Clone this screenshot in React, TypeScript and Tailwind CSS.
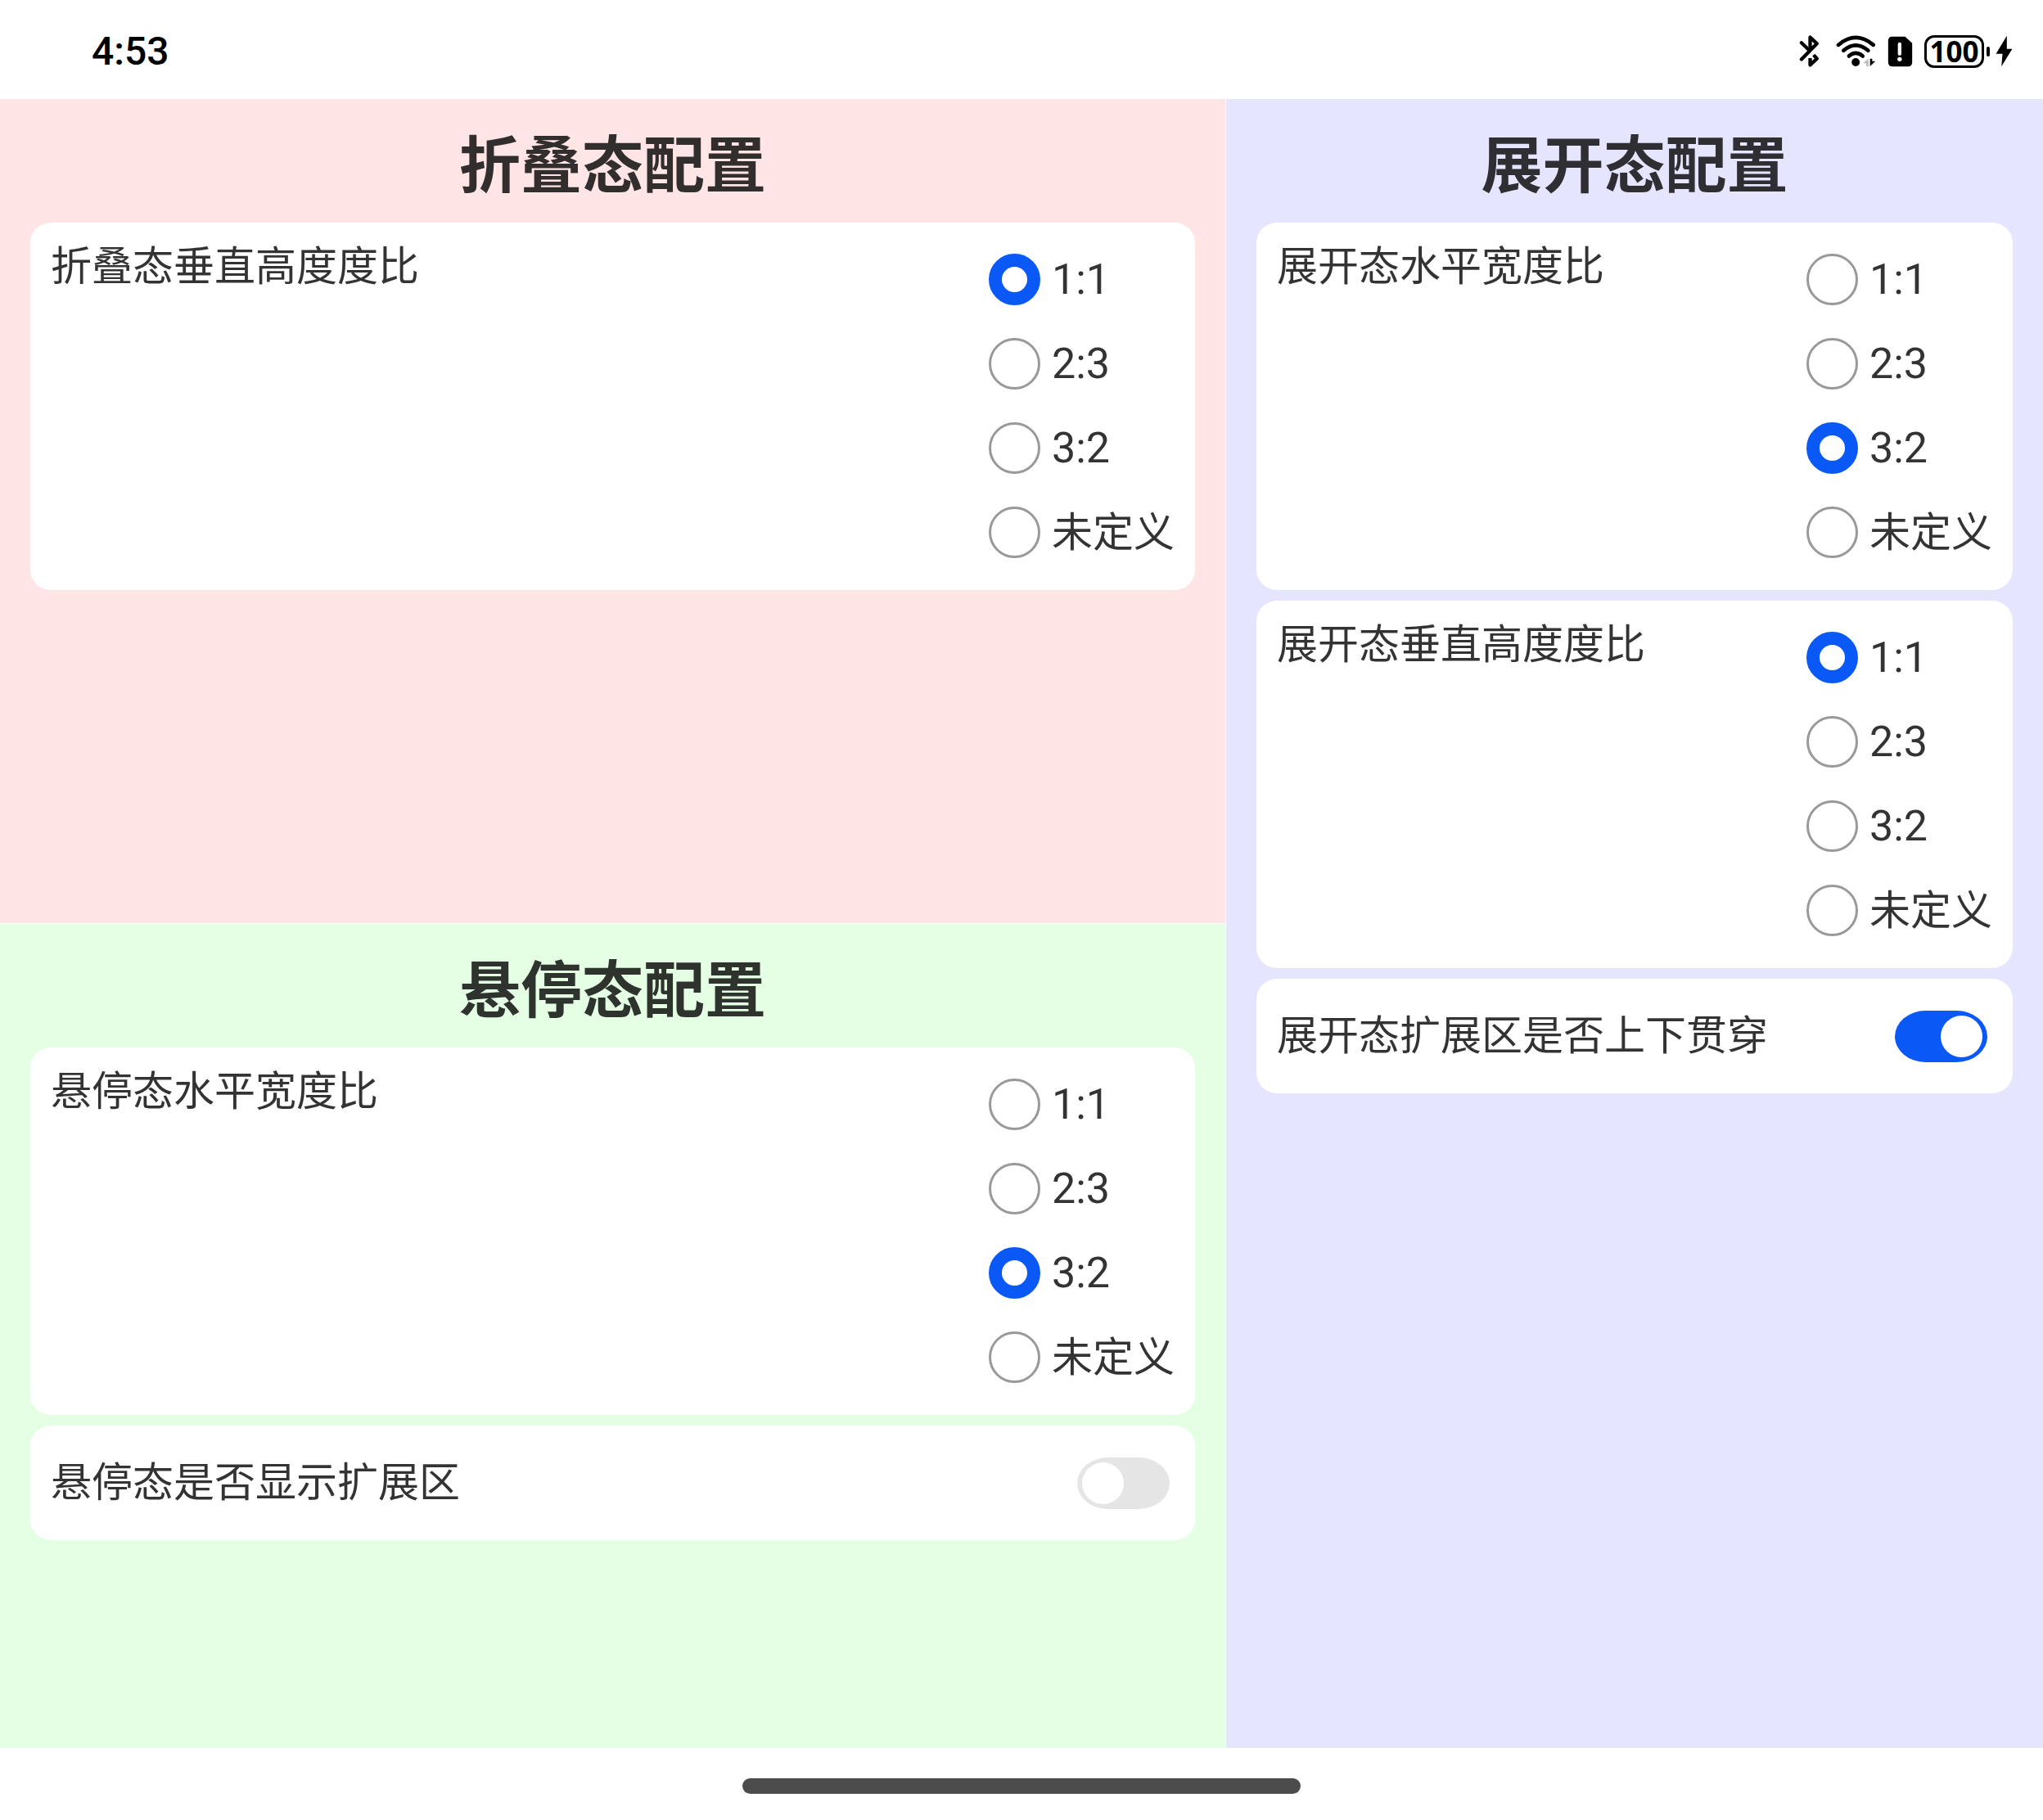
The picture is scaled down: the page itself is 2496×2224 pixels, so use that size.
import { useId, useState } from "react";

const RATIOS = ["1:1", "2:3", "3:2"];
const OPTIONS = [...RATIOS, "未定义"];

function BluetoothIcon() {
  return (
    <svg viewBox="66 70 74 118" className="h-[39px] w-[25px]" fill="none" stroke="#000" strokeWidth="13" strokeLinecap="round" strokeLinejoin="round" aria-hidden="true">
      <path d="M74 98 L103 126" />
      <path d="M74 159 L131 101 L106 78 V126" />
      <path d="M119 143 L131 157 L106 180 V155" strokeLinecap="butt" />
    </svg>
  );
}

function WifiIcon() {
  return (
    <svg viewBox="202 70 146 118" className="h-[39px] w-[49px]" fill="none" stroke="#000" strokeWidth="14" strokeLinecap="round" aria-hidden="true">
      <path d="M210 106 Q274 52 339 106" />
      <path d="M229 127 Q274 88 320 127" />
      <path d="M249 147 Q274 126 300 147" />
      <circle cx="274" cy="170" r="15" fill="#000" stroke="none" />
      <path d="M321 157 V185 H313 V174 H301 Z" fill="#bbb" stroke="none" />
      <path d="M327 185 V157 H335 V166 H347 Z" fill="#000" stroke="none" />
    </svg>
  );
}

function SimAlertIcon() {
  return (
    <svg viewBox="390 72 92 114" className="h-[38px] w-[31px]" aria-hidden="true">
      <path d="M407 74 H454 L480 98 V168 Q480 184 464 184 H408 Q392 184 392 168 V90 Q392 74 407 74 Z" fill="#000" />
      <path d="M434 102 V137" stroke="#fff" strokeWidth="13" strokeLinecap="round" />
      <circle cx="434" cy="157" r="8" fill="#fff" />
    </svg>
  );
}

function BoltIcon() {
  return (
    <svg viewBox="784 70 62 118" className="h-[39px] w-[21px]" aria-hidden="true">
      <path d="M825 72 L785 139 H809 L805 186 L845 121 H825 Z" fill="#000" />
    </svg>
  );
}

function StatusBar() {
  return (
    <header className="flex h-[121px] shrink-0 items-center justify-between pt-[4px] pr-[37px] pl-28 text-black">
      <time className="text-[48px] leading-[58px] font-medium">4:53</time>
      <div className="flex items-center">
        <BluetoothIcon />
        <div className="ml-5 flex">
          <WifiIcon />
        </div>
        <div className="ml-[14px] flex">
          <SimAlertIcon />
        </div>
        <div className="ml-[14px] flex h-10 w-[73px] items-center justify-center rounded-[12px] border-3 border-black font-['Noto_Sans'] text-[35px] leading-[34px] font-bold">
          100
        </div>
        <div className="ml-[3px] h-3 w-[4px] rounded-[2px] bg-black" />
        <div className="ml-[7px] flex">
          <BoltIcon />
        </div>
      </div>
    </header>
  );
}

function RatioCard({ title, initial }: { title: string; initial: string }) {
  const name = useId();
  const [value, setValue] = useState(initial);
  return (
    <fieldset aria-label={title} className="flex min-w-0 justify-between rounded-[25px] bg-white px-[25px]">
      <span className="pt-[25px] text-[50px] leading-[58px]">{title}</span>
      <div className="flex flex-col gap-10 pt-[38px] pb-[39px]">
        {OPTIONS.map((option) => (
          <label
            key={option}
            className={`flex h-[63px] items-center gap-[14px] leading-[58px] ${RATIOS.includes(option) ? "text-[52px]" : "text-[50px]"}`}
          >
            <input
              type="radio"
              name={name}
              value={option}
              checked={value === option}
              onChange={() => setValue(option)}
              className="size-[63px] shrink-0 appearance-none rounded-full border-3 border-[#999] bg-white checked:border-16 checked:border-[#0a59f7]"
            />
            {option}
          </label>
        ))}
      </div>
    </fieldset>
  );
}

function ToggleCard({ title, initial }: { title: string; initial: boolean }) {
  const [on, setOn] = useState(initial);
  return (
    <label className="flex h-[140px] items-center justify-between rounded-[25px] bg-white pr-[31px] pl-[25px] text-[50px] leading-[58px]">
      {title}
      <input
        type="checkbox"
        role="switch"
        checked={on}
        onChange={(e) => setOn(e.target.checked)}
        className="flex h-[63px] w-[113px] shrink-0 appearance-none items-center rounded-[38px/32px] bg-[#e5e5e5] px-[6px] before:size-[51px] before:rounded-full before:bg-white before:content-[''] checked:justify-end checked:bg-[#0a59f7]"
      />
    </label>
  );
}

function PanelTitle({ children }: { children: string }) {
  return <h2 className="pt-[38px] pb-[25px] text-center text-[75px] leading-[88px] font-bold">{children}</h2>;
}

export default function App() {
  return (
    <div className="flex min-h-screen flex-col bg-white font-[Roboto,'Noto_Sans_CJK_SC',sans-serif] text-black/80">
      <StatusBar />
      <main className="grid flex-1 grid-cols-[3fr_2fr] grid-rows-2 gap-px">
        <section className="bg-[#ffe5e5] px-[37px]">
          <PanelTitle>折叠态配置</PanelTitle>
          <RatioCard title="折叠态垂直高度度比" initial="1:1" />
        </section>
        <section className="row-span-2 bg-[#e5e5ff] px-[37px]">
          <PanelTitle>展开态配置</PanelTitle>
          <div className="flex flex-col gap-[13px]">
            <RatioCard title="展开态水平宽度比" initial="3:2" />
            <RatioCard title="展开态垂直高度度比" initial="1:1" />
            <ToggleCard title="展开态扩展区是否上下贯穿" initial={true} />
          </div>
        </section>
        <section className="bg-[#e5ffe5] px-[37px]">
          <PanelTitle>悬停态配置</PanelTitle>
          <div className="flex flex-col gap-[13px]">
            <RatioCard title="悬停态水平宽度比" initial="3:2" />
            <ToggleCard title="悬停态是否显示扩展区" initial={false} />
          </div>
        </section>
      </main>
      <footer className="flex h-[88px] shrink-0 justify-center pt-[37px]">
        <div className="h-[19px] w-[682px] rounded-full bg-[#4c4c4c]" />
      </footer>
    </div>
  );
}
